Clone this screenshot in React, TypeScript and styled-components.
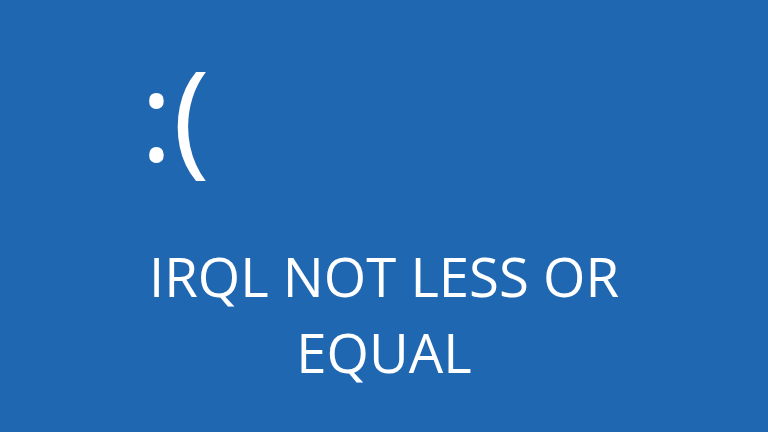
import styled, { createGlobalStyle } from 'styled-components';

const GlobalStyle = createGlobalStyle`
  html, body {
    margin: 0;
    padding: 0;
    background-color: #2067b2;
  }
`;

const Screen = styled.div`
  width: 768px;
  height: 432px;
  background-color: #2067b2;
  color: #ffffff;
  font-family: "Open Sans", "Noto Sans", sans-serif;
  display: flex;
  flex-direction: column;
  padding: 28px 0 0 140px;
  box-sizing: border-box;
  overflow: hidden;
`;

const Face = styled.div`
  font-size: 125px;
  line-height: 170px;
  font-weight: 400;
  height: 170px;
`;

const StopCode = styled.h1`
  margin: 40px 0 0 -140px;
  font-size: 54.5px;
  font-weight: 400;
  line-height: 76px;
  text-align: center;
  width: 768px;
  padding: 0 140px;
  box-sizing: border-box;
`;

export default function App() {
  return (
    <>
      <GlobalStyle />
      <Screen>
        <Face>:(</Face>
        <StopCode>IRQL NOT LESS OR EQUAL</StopCode>
      </Screen>
    </>
  );
}
